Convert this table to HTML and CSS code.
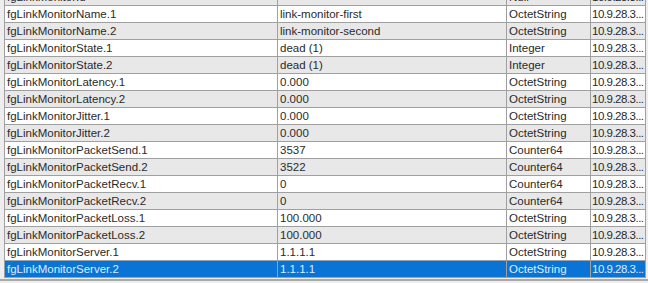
FILE: index.html
```html
<!DOCTYPE html>
<html>
<head>
<meta charset="utf-8">
<link rel="stylesheet" href="styles.css">
</head>
<body>
<div class="frame">
  <div class="viewport">
    <div class="table">
      <div class="row alt"><div class="cell">fgLinkMonitorId</div><div class="cell"></div><div class="cell">Null</div><div class="cell ip">10.9.28.3...</div></div>
      <div class="row"><div class="cell">fgLinkMonitorName.1</div><div class="cell">link-monitor-first</div><div class="cell">OctetString</div><div class="cell ip">10.9.28.3...</div></div>
      <div class="row alt"><div class="cell">fgLinkMonitorName.2</div><div class="cell">link-monitor-second</div><div class="cell">OctetString</div><div class="cell ip">10.9.28.3...</div></div>
      <div class="row"><div class="cell">fgLinkMonitorState.1</div><div class="cell">dead (1)</div><div class="cell">Integer</div><div class="cell ip">10.9.28.3...</div></div>
      <div class="row alt"><div class="cell">fgLinkMonitorState.2</div><div class="cell">dead (1)</div><div class="cell">Integer</div><div class="cell ip">10.9.28.3...</div></div>
      <div class="row"><div class="cell">fgLinkMonitorLatency.1</div><div class="cell">0.000</div><div class="cell">OctetString</div><div class="cell ip">10.9.28.3...</div></div>
      <div class="row alt"><div class="cell">fgLinkMonitorLatency.2</div><div class="cell">0.000</div><div class="cell">OctetString</div><div class="cell ip">10.9.28.3...</div></div>
      <div class="row"><div class="cell">fgLinkMonitorJitter.1</div><div class="cell">0.000</div><div class="cell">OctetString</div><div class="cell ip">10.9.28.3...</div></div>
      <div class="row alt"><div class="cell">fgLinkMonitorJitter.2</div><div class="cell">0.000</div><div class="cell">OctetString</div><div class="cell ip">10.9.28.3...</div></div>
      <div class="row"><div class="cell">fgLinkMonitorPacketSend.1</div><div class="cell">3537</div><div class="cell">Counter64</div><div class="cell ip">10.9.28.3...</div></div>
      <div class="row alt"><div class="cell">fgLinkMonitorPacketSend.2</div><div class="cell">3522</div><div class="cell">Counter64</div><div class="cell ip">10.9.28.3...</div></div>
      <div class="row"><div class="cell">fgLinkMonitorPacketRecv.1</div><div class="cell">0</div><div class="cell">Counter64</div><div class="cell ip">10.9.28.3...</div></div>
      <div class="row alt"><div class="cell">fgLinkMonitorPacketRecv.2</div><div class="cell">0</div><div class="cell">Counter64</div><div class="cell ip">10.9.28.3...</div></div>
      <div class="row"><div class="cell">fgLinkMonitorPacketLoss.1</div><div class="cell">100.000</div><div class="cell">OctetString</div><div class="cell ip">10.9.28.3...</div></div>
      <div class="row alt"><div class="cell">fgLinkMonitorPacketLoss.2</div><div class="cell">100.000</div><div class="cell">OctetString</div><div class="cell ip">10.9.28.3...</div></div>
      <div class="row"><div class="cell">fgLinkMonitorServer.1</div><div class="cell">1.1.1.1</div><div class="cell">OctetString</div><div class="cell ip">10.9.28.3...</div></div>
      <div class="row selected"><div class="cell">fgLinkMonitorServer.2</div><div class="cell">1.1.1.1</div><div class="cell">OctetString</div><div class="cell ip">10.9.28.3...</div></div>
    </div>
  </div>
  <div class="hbar"></div>
</div>
</body>
</html>
```

FILE: styles.css
```css
html, body {
  margin: 0;
  padding: 0;
  background: #eeeeee;
}

body {
  font-family: "Liberation Sans", Arial, sans-serif;
  font-size: 11.5px;
  color: #2a2a2a;
}

.frame {
  width: 648px;
  height: 283px;
  overflow: hidden;
  padding-left: 4px;
  box-sizing: border-box;
}

.viewport {
  height: 278px;
  overflow: hidden;
}

.table {
  margin-top: -11px;
  border-left: 1px solid #a0a0a0;
  width: 641px;
}

.row {
  display: grid;
  grid-template-columns: 273px 229px 84px 55px;
  height: 17px;
  box-sizing: border-box;
  border-bottom: 1px solid #a0a0a0;
  background: #ffffff;
}

.row.alt {
  background: #e8e8e8;
}

.row.selected {
  background: #0a74d6;
  color: #dcecff;
}

.cell {
  border-right: 1px solid #a0a0a0;
  padding-left: 2px;
  line-height: 16px;
  white-space: nowrap;
  overflow: hidden;
}

.cell.ip {
  padding-left: 1px;
  letter-spacing: -0.5px;
}

.hbar {
  height: 2px;
  margin-top: 1px;
  margin-left: -4px;
  background: #a9a9a9;
}
```
